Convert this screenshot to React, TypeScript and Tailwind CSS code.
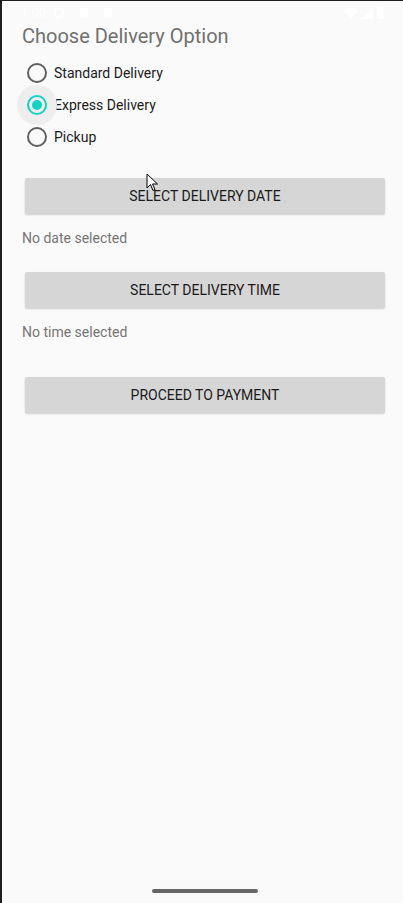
import React from "react";

const font = { fontFamily: "Roboto, 'Noto Sans', sans-serif" };

function Radio({ checked, label }: { checked?: boolean; label: string }) {
  return (
    <div className="flex items-center h-[32px]">
      <div className="relative w-[30px] h-[32px] flex items-center justify-center">
        {checked && (
          <div className="absolute left-[-5px] top-[-4px] w-[40px] h-[40px] rounded-full bg-[#eeeeee]" />
        )}
        <div
          className={
            checked
              ? "relative w-[20px] h-[20px] rounded-full border-2 border-[#14d2c6] flex items-center justify-center"
              : "relative w-[20px] h-[20px] rounded-full border-2 border-[#5f5f5f]"
          }
        >
          {checked && <div className="w-[10px] h-[10px] rounded-full bg-[#14d2c6]" />}
        </div>
      </div>
      <span className="ml-[2px] text-[14px] text-[#1c1c1c]">{label}</span>
    </div>
  );
}

function Btn({ children }: { children: React.ReactNode }) {
  return (
    <div className="mx-[3px] h-[36px] bg-[#d6d6d6] rounded-[2px] shadow-[0_1px_2px_rgba(0,0,0,0.18)] flex items-center justify-center text-[14px] font-normal text-[#1a1a1a] tracking-[0px]">
      {children}
    </div>
  );
}

export default function App() {
  return (
    <div className="w-[403px] h-[903px] bg-[#1f1f1f] pl-[2px] pt-[1px]" style={font}>
      <div className="relative w-full h-full bg-[#fafafa] overflow-hidden">
        {/* status bar */}
        <div className="h-[24px] flex items-center justify-between px-[19px] text-white text-[13px]">
          <div className="flex items-center gap-[8px]">
            <span>1:00</span>
            <svg width="10" height="12" viewBox="0 0 10 12"><path d="M5 1 L9 2.5 V6 C9 8.5 7 10.5 5 11 C3 10.5 1 8.5 1 6 V2.5 Z" fill="none" stroke="white" strokeWidth="1.5" /></svg>
            <div className="w-[8px] h-[10px] bg-white ml-[8px]" />
            <div className="w-[8px] h-[10px] bg-white ml-[8px] rounded-[1px]" />
          </div>
          <div className="flex items-center gap-[4px]">
            <svg width="14" height="11" viewBox="0 0 14 11"><path d="M0 2 Q7 -2 14 2 L7 11 Z" fill="white" /></svg>
            <svg width="11" height="11" viewBox="0 0 11 11"><path d="M11 0 V11 H0 Z" fill="white" /></svg>
            <div className="w-[7px] h-[12px] bg-white rounded-[1px]" />
          </div>
        </div>

        <div className="pl-[20px] pr-[15px]">
          <div className="text-[20px] text-[#707070] leading-[24px] mt-[-1px]">Choose Delivery Option</div>

          <div className="mt-[9px]">
            <Radio label="Standard Delivery" />
            <Radio checked label="Express Delivery" />
            <Radio label="Pickup" />
          </div>

          <div className="mt-[25px]">
            <Btn>SELECT DELIVERY DATE</Btn>
          </div>
          <div className="mt-[15px] text-[14px] text-[#757575] leading-[18px]">No date selected</div>

          <div className="mt-[25px]">
            <Btn>SELECT DELIVERY TIME</Btn>
          </div>
          <div className="mt-[15px] text-[14px] text-[#757575] leading-[18px]">No time selected</div>

          <div className="mt-[36px]">
            <Btn>PROCEED TO PAYMENT</Btn>
          </div>
        </div>

        {/* mouse cursor */}
        <svg className="absolute left-[144px] top-[172px]" width="14" height="20" viewBox="0 0 14 20">
          <path d="M1 1 L1 15 L4.5 11.5 L7 17.5 L9 16.5 L6.5 11 L11.5 11 Z" fill="white" stroke="black" strokeWidth="1" />
        </svg>

        {/* home bar */}
        <div className="absolute left-[150px] top-[888px] w-[106px] h-[4px] rounded-full bg-[#666666]" />
      </div>
    </div>
  );
}
